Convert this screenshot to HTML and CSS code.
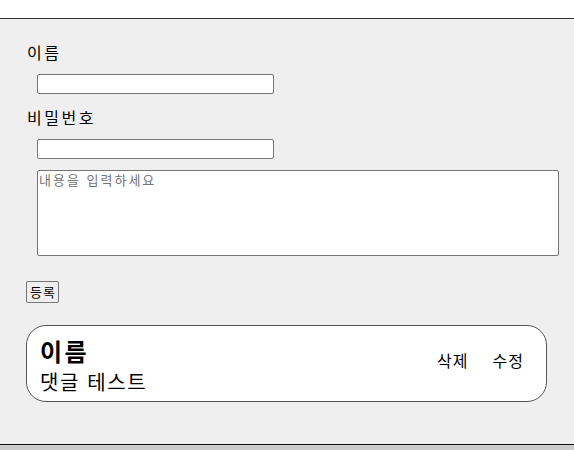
FILE: index.html
```html
<!DOCTYPE html>
<html lang="ko">
<head>
<meta charset="utf-8">
<link rel="stylesheet" href="styles.css">
</head>
<body>
<div class="page">
  <form class="form">
    <label class="label">이름</label>
    <input class="field" type="text">
    <label class="label label-2">비밀번호</label>
    <input class="field" type="password">
    <textarea class="content" placeholder="내용을 입력하세요"></textarea>
    <button class="submit" type="button">등록</button>
  </form>
  <div class="comment">
    <div class="comment-body">
      <div class="comment-name">이름</div>
      <div class="comment-text">댓글 테스트</div>
    </div>
    <div class="comment-actions">
      <span class="action">삭제</span>
      <span class="action">수정</span>
    </div>
  </div>
</div>
<div class="footer"></div>
</body>
</html>
```
FILE: styles.css
```css
html, body {
  margin: 0;
  padding: 0;
  background: #ffffff;
  font-family: "Noto Sans CJK KR", "Noto Sans", sans-serif;
  color: #000;
}
.page {
  margin-top: 18px;
  border-top: 1px solid #333;
  border-bottom: 1px solid #111;
  background: #efefef;
  padding: 21px 15px 42px 26px;
}
.form {
  display: flex;
  flex-direction: column;
  align-items: flex-start;
}
.label {
  display: block;
  font-size: 16px;
  line-height: 24px;
  height: 24px;
  padding-left: 1px;
  letter-spacing: 2.5px;
}
.label-2 {
  margin-top: 11px;
}
.field {
  box-sizing: border-box;
  width: 237px;
  height: 20px;
  margin: 10px 0 0 11px;
  border: 1px solid #767676;
  border-radius: 2px;
  background: #fff;
  padding: 0 2px;
}
.content {
  box-sizing: border-box;
  align-self: stretch;
  height: 86px;
  margin: 11px 0 0 11px;
  border: 1px solid #767676;
  border-radius: 2px;
  background: #fff;
  padding: 0 1px;
  resize: none;
  font-family: "Noto Sans CJK KR", sans-serif;
  font-size: 13px;
  line-height: 17px;
  letter-spacing: 2px;
}
.content::placeholder {
  color: #757575;
}
.submit {
  box-sizing: border-box;
  height: 22px;
  width: 33px;
  margin-top: 25px;
  padding: 0;
  border: 1px solid #767676;
  border-radius: 2px;
  background: #efefef;
  font-family: "Noto Sans CJK KR", sans-serif;
  font-size: 13px;
  line-height: 18px;
  letter-spacing: 1px;
  text-indent: 1px;
  color: #000;
}
.comment {
  box-sizing: border-box;
  margin-top: 22px;
  width: 521px;
  height: 77px;
  border: 1px solid #555;
  border-radius: 20px;
  background: #fff;
  padding: 9px 22px 0 13px;
  display: flex;
  justify-content: space-between;
  align-items: flex-start;
}
.comment-name {
  font-size: 24px;
  font-weight: 700;
  line-height: 32px;
  letter-spacing: 2.5px;
}
.comment-text {
  font-size: 20px;
  line-height: 26px;
  margin-top: 2px;
  letter-spacing: 1.6px;
}
.comment-actions {
  display: flex;
  gap: 24px;
  margin-top: 13px;
  font-size: 16px;
  line-height: 24px;
}
.action {
  letter-spacing: 1px;
}
.footer {
  background: #cccccc;
  height: 6px;
}
```
